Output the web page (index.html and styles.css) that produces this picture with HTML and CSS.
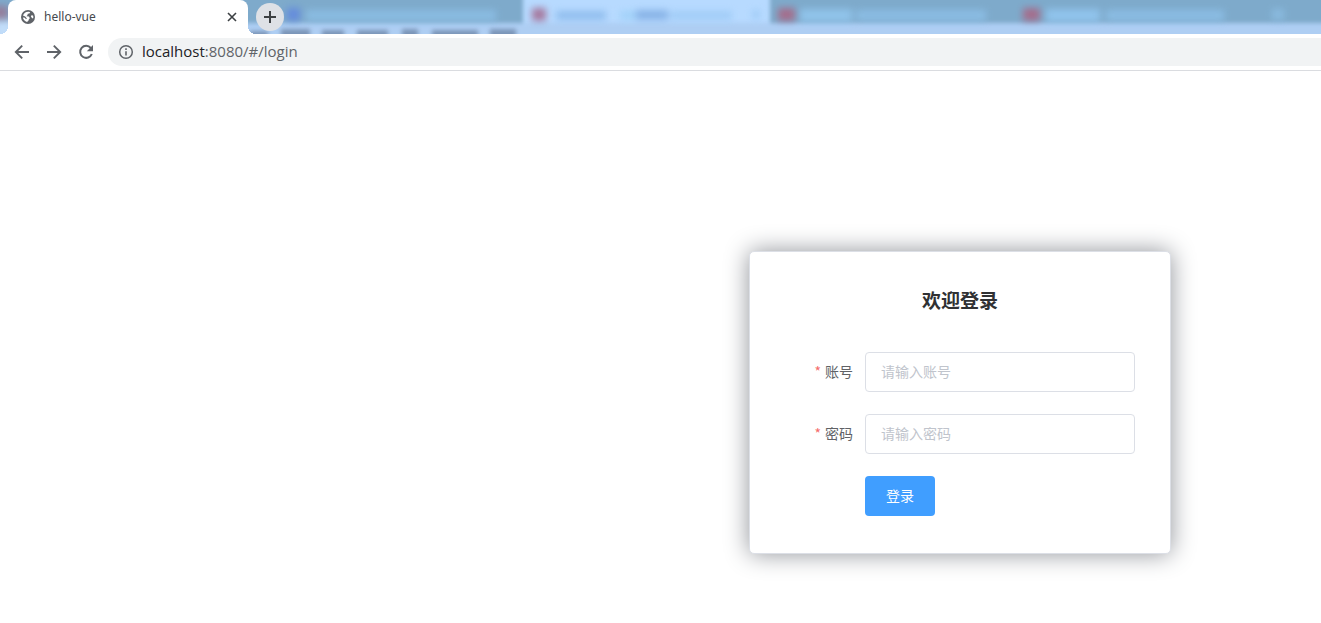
FILE: index.html
```html
<!DOCTYPE html>
<html lang="zh-CN">
<head>
<meta charset="utf-8">
<title>hello-vue</title>
<link rel="stylesheet" href="styles.css">
</head>
<body>
<header class="browser">
  <div class="tab-strip">
    <svg class="glass" aria-hidden="true">
      <defs>
        <filter id="soft" x="-10%" y="-100%" width="120%" height="300%" color-interpolation-filters="sRGB"><feGaussianBlur stdDeviation="3.5"/></filter>
        <filter id="fine" x="-10%" y="-50%" width="120%" height="200%" color-interpolation-filters="sRGB"><feGaussianBlur stdDeviation="2"/></filter>
      </defs>
      <rect x="523" y="-8" width="247" height="40" fill="#b7daff" filter="url(#fine)"/>
      <rect x="-10" y="23" width="110%" height="20" fill="#aecef3" filter="url(#fine)"/>
      <g filter="url(#soft)" opacity="0.75">
        <rect x="-6" y="6" width="14" height="13" fill="#9d6f8b"/>
        <rect x="-6" y="20" width="20" height="18" fill="#c8e2fb"/>
        <rect x="287" y="8" width="13" height="13" fill="#5c82e2"/>
        <rect x="306" y="10" width="190" height="11" fill="#8ec2ea"/>
        <rect x="532" y="8" width="14" height="13" fill="#a05a80"/>
        <rect x="556" y="11" width="50" height="9" fill="#84b4e8"/>
        <rect x="620" y="11" width="20" height="9" fill="#9bcff7"/>
        <rect x="636" y="10" width="32" height="10" fill="#78a6df"/>
        <rect x="670" y="11" width="62" height="9" fill="#9ac8f4"/>
        <rect x="752" y="10" width="8" height="9" fill="#9ac8f4"/>
        <rect x="778" y="8" width="17" height="13" fill="#b05a78"/>
        <rect x="800" y="9" width="52" height="13" fill="#96ccf5"/>
        <rect x="856" y="10" width="130" height="11" fill="#8fc3ec"/>
        <rect x="1023" y="8" width="17" height="13" fill="#b05a78"/>
        <rect x="1046" y="9" width="54" height="13" fill="#96ccf7"/>
        <rect x="1106" y="10" width="118" height="11" fill="#8fc3ec"/>
        <rect x="1272" y="9" width="12" height="11" fill="#8ec0e6"/>
      </g>
      <g filter="url(#fine)" fill="#6f88aa" opacity="0.8">
        <rect x="250" y="31" width="18" height="10"/>
        <rect x="281" y="29" width="29" height="10"/>
        <rect x="322" y="30" width="22" height="9"/>
        <rect x="357" y="30" width="31" height="9"/>
        <rect x="402" y="29" width="16" height="10"/>
        <rect x="432" y="30" width="46" height="9"/>
        <rect x="490" y="29" width="26" height="10"/>
      </g>
    </svg>
    <div class="tab">
      <svg class="globe" viewBox="0 0 16 16" aria-hidden="true">
        <circle cx="8" cy="8" r="7" fill="#5f6368"/>
        <path d="M8.6 2.8C9.4 2.8 9.9 3 10.2 3.3L9.4 4.6 7.8 4.8 7.4 6.3 6.4 7.3 9 7.5 9.8 9.2 8.8 10.4 8.4 11.8 7 13C4.9 12.5 3.2 10.8 2.9 8.6L4.8 8.8 6 10.2 6.9 9.4 5.2 7.4 3 6.6C3.8 4.2 5.8 2.7 8.6 2.8Z" fill="#fff"/>
        <path d="M11.4 6.2 13 6.4C13.4 7.2 13.4 8.4 13 9.4L12 9 10.9 7.6Z" fill="#fff"/>
      </svg>
      <span class="tab-title">hello-vue</span>
      <button class="close" type="button" aria-label="关闭标签页">
        <svg width="10" height="10" viewBox="0 0 10 10"><path d="M1 1 9 9M9 1 1 9" stroke="#3c4043" stroke-width="1.6"/></svg>
      </button>
    </div>
    <button class="new-tab" type="button" aria-label="新标签页">
      <svg width="12" height="12" viewBox="0 0 12 12"><path d="M6 0V12M0 6H12" stroke="#3c4043" stroke-width="2"/></svg>
    </button>
  </div>
  <nav class="toolbar" aria-label="浏览器">
    <button class="tool" type="button" aria-label="后退">
      <svg width="16" height="16" viewBox="0 0 16 16"><path d="M15 8H2.2M8.2 1.6 1.8 8 8.2 14.4" fill="none" stroke="#5f6368" stroke-width="1.9"/></svg>
    </button>
    <button class="tool" type="button" aria-label="前进">
      <svg width="16" height="16" viewBox="0 0 16 16"><path d="M1 8H13.8M7.8 1.6 14.2 8 7.8 14.4" fill="none" stroke="#5f6368" stroke-width="1.9"/></svg>
    </button>
    <button class="tool" type="button" aria-label="重新加载">
      <svg width="16" height="16" viewBox="0 0 16 16"><path d="M12.8 4A6 6 0 1 0 13.8 10" fill="none" stroke="#5f6368" stroke-width="2"/><path d="M15 1V7.2H8.8Z" fill="#5f6368"/></svg>
    </button>
    <div class="address">
      <svg width="16" height="16" viewBox="0 0 16 16" aria-hidden="true"><circle cx="8" cy="8" r="6.3" fill="none" stroke="#5f6368" stroke-width="1.5"/><path d="M8 7.2V11.6M8 4.3V5.9" stroke="#5f6368" stroke-width="1.6"/></svg>
      <span class="url"><span class="host">localhost</span>:8080/#/login</span>
    </div>
  </nav>
</header>
<main class="page">
  <form class="login">
    <h3 class="login-title">欢迎登录</h3>
    <div class="field">
      <label class="field-label" for="account">账号</label>
      <input class="field-input" id="account" type="text" placeholder="请输入账号">
    </div>
    <div class="field">
      <label class="field-label" for="password">密码</label>
      <input class="field-input" id="password" type="password" placeholder="请输入密码">
    </div>
    <div class="actions">
      <button class="submit" type="button">登录</button>
    </div>
  </form>
</main>
</body>
</html>
```
FILE: styles.css
```css
* {
  box-sizing: border-box;
}

body {
  margin: 0;
  background: #fff;
  font-family: "Open Sans", "Noto Sans CJK SC", sans-serif;
}

button {
  border: 0;
  padding: 0;
  background: none;
  font-family: inherit;
}

svg {
  display: block;
  flex: none;
}

.browser {
  border-bottom: 1px solid #dadce0;
}

.tab-strip {
  position: relative;
  display: flex;
  align-items: center;
  gap: 8px;
  height: 34px;
  padding-left: 8px;
  background: #7eaacb;
  overflow: hidden;
}

.glass {
  position: absolute;
  inset: 0;
  width: 100%;
  height: 100%;
}

.tab {
  position: relative;
  display: flex;
  align-items: center;
  gap: 8px;
  width: 240px;
  height: 34px;
  padding: 0 10px 0 12px;
  background: #fff;
  border-radius: 8px 8px 0 0;
}

.tab::before,
.tab::after {
  content: "";
  position: absolute;
  bottom: 0;
  width: 8px;
  height: 8px;
}

.tab::before {
  right: 100%;
  background: radial-gradient(circle at 0 0, transparent 8px, #fff 8px);
}

.tab::after {
  left: 100%;
  background: radial-gradient(circle at 100% 0, transparent 8px, #fff 8px);
}

.globe {
  width: 16px;
  height: 16px;
}

.tab-title {
  flex: 1;
  color: #45494d;
  font-family: "Noto Sans", sans-serif;
  font-size: 12px;
  line-height: 18px;
}

.close {
  display: grid;
  place-items: center;
  width: 12px;
  height: 16px;
}

.new-tab {
  position: relative;
  display: grid;
  place-items: center;
  width: 28px;
  height: 28px;
  border-radius: 50%;
  background: #dee1e6;
}

.toolbar {
  display: flex;
  align-items: center;
  gap: 16px;
  height: 36px;
  padding-left: 14px;
}

.tool {
  width: 16px;
  height: 16px;
}

.address {
  flex: 1;
  display: flex;
  align-items: center;
  gap: 8px;
  height: 28px;
  margin-left: -2px;
  padding-left: 10px;
  background: #f1f3f4;
  border-radius: 14px 0 0 14px;
}

.url {
  padding-bottom: 2px;
  color: #5f6368;
  font-size: 15px;
  line-height: 20px;
}

.host {
  color: #202124;
}

.page {
  display: flex;
  justify-content: flex-end;
  padding: 180px 150px 68px 16px;
}

.login {
  width: 422px;
  padding: 35px 35px 15px;
  border: 1px solid #dcdfe6;
  border-radius: 5px;
  background: #fff;
  box-shadow: 0 0 25px #909399;
  font-family: "Noto Sans CJK SC", sans-serif;
}

.login-title {
  margin: 0 0 39px;
  color: #303133;
  font-size: 19px;
  line-height: 26px;
  text-align: center;
}

.field {
  display: flex;
  margin-bottom: 22px;
}

.field-label {
  width: 80px;
  padding-right: 12px;
  color: #606266;
  font-size: 14px;
  line-height: 38px;
  text-align: right;
}

.field-label::before {
  content: "*";
  margin-right: 4px;
  color: #f56c6c;
}

.field-input {
  flex: 1;
  min-width: 0;
  height: 40px;
  padding: 0 15px 2px;
  border: 1px solid #dcdfe6;
  border-radius: 4px;
  background: #fff;
  color: #606266;
  font-family: inherit;
  font-size: 14px;
}

.field-input::placeholder {
  color: #c0c4cc;
}

.actions {
  margin-bottom: 22px;
  padding-left: 80px;
}

.submit {
  display: block;
  height: 40px;
  padding: 0 21px 2px;
  border-radius: 4px;
  background: #409eff;
  color: #fff;
  font-size: 14px;
}
```
